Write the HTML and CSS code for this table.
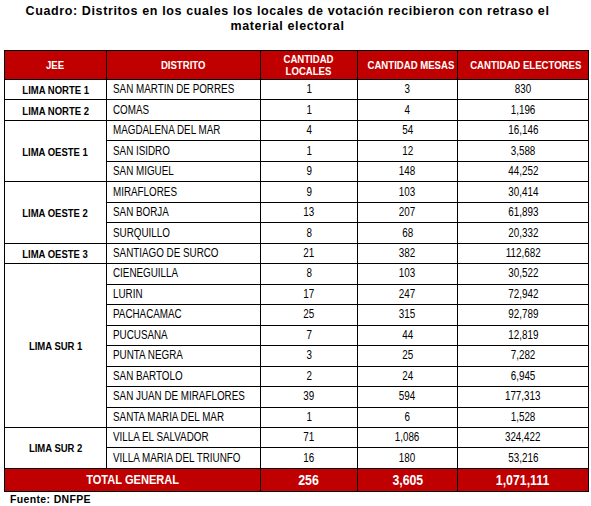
FILE: index.html
```html
<!DOCTYPE html>
<html lang="es">
<head>
<meta charset="utf-8">
<link rel="stylesheet" href="styles.css">
</head>
<body>
<div class="page">
  <h1 class="title">Cuadro: Distritos en los cuales los locales de votación recibieron con retraso el<br>material electoral</h1>
  <table class="grid">
    <colgroup>
      <col class="c1"><col class="c2"><col class="c3"><col class="c4"><col class="c5">
    </colgroup>
    <thead>
      <tr class="head">
        <th><span class="n">JEE</span></th><th><span class="n">DISTRITO</span></th><th><span class="n">CANTIDAD<br>LOCALES</span></th><th><span class="n">CANTIDAD MESAS</span></th><th><span class="n">CANTIDAD ELECTORES</span></th>
      </tr>
    </thead>
    <tbody>
      <tr><td class="jee"><span class="n">LIMA NORTE 1</span></td><td class="dist"><span class="n">SAN MARTIN DE PORRES</span></td><td><span class="n">1</span></td><td><span class="n">3</span></td><td><span class="n">830</span></td></tr>
      <tr><td class="jee"><span class="n">LIMA NORTE 2</span></td><td class="dist"><span class="n">COMAS</span></td><td><span class="n">1</span></td><td><span class="n">4</span></td><td><span class="n">1,196</span></td></tr>
      <tr><td class="jee" rowspan="3"><span class="n">LIMA OESTE 1</span></td><td class="dist"><span class="n">MAGDALENA DEL MAR</span></td><td><span class="n">4</span></td><td><span class="n">54</span></td><td><span class="n">16,146</span></td></tr>
      <tr><td class="dist"><span class="n">SAN ISIDRO</span></td><td><span class="n">1</span></td><td><span class="n">12</span></td><td><span class="n">3,588</span></td></tr>
      <tr><td class="dist"><span class="n">SAN MIGUEL</span></td><td><span class="n">9</span></td><td><span class="n">148</span></td><td><span class="n">44,252</span></td></tr>
      <tr><td class="jee" rowspan="3"><span class="n">LIMA OESTE 2</span></td><td class="dist"><span class="n">MIRAFLORES</span></td><td><span class="n">9</span></td><td><span class="n">103</span></td><td><span class="n">30,414</span></td></tr>
      <tr><td class="dist"><span class="n">SAN BORJA</span></td><td><span class="n">13</span></td><td><span class="n">207</span></td><td><span class="n">61,893</span></td></tr>
      <tr><td class="dist"><span class="n">SURQUILLO</span></td><td><span class="n">8</span></td><td><span class="n">68</span></td><td><span class="n">20,332</span></td></tr>
      <tr><td class="jee"><span class="n">LIMA OESTE 3</span></td><td class="dist"><span class="n">SANTIAGO DE SURCO</span></td><td><span class="n">21</span></td><td><span class="n">382</span></td><td><span class="n">112,682</span></td></tr>
      <tr><td class="jee" rowspan="8"><span class="n">LIMA SUR 1</span></td><td class="dist"><span class="n">CIENEGUILLA</span></td><td><span class="n">8</span></td><td><span class="n">103</span></td><td><span class="n">30,522</span></td></tr>
      <tr><td class="dist"><span class="n">LURIN</span></td><td><span class="n">17</span></td><td><span class="n">247</span></td><td><span class="n">72,942</span></td></tr>
      <tr><td class="dist"><span class="n">PACHACAMAC</span></td><td><span class="n">25</span></td><td><span class="n">315</span></td><td><span class="n">92,789</span></td></tr>
      <tr><td class="dist"><span class="n">PUCUSANA</span></td><td><span class="n">7</span></td><td><span class="n">44</span></td><td><span class="n">12,819</span></td></tr>
      <tr><td class="dist"><span class="n">PUNTA NEGRA</span></td><td><span class="n">3</span></td><td><span class="n">25</span></td><td><span class="n">7,282</span></td></tr>
      <tr><td class="dist"><span class="n">SAN BARTOLO</span></td><td><span class="n">2</span></td><td><span class="n">24</span></td><td><span class="n">6,945</span></td></tr>
      <tr><td class="dist"><span class="n">SAN JUAN DE MIRAFLORES</span></td><td><span class="n">39</span></td><td><span class="n">594</span></td><td><span class="n">177,313</span></td></tr>
      <tr><td class="dist"><span class="n">SANTA MARIA DEL MAR</span></td><td><span class="n">1</span></td><td><span class="n">6</span></td><td><span class="n">1,528</span></td></tr>
      <tr><td class="jee" rowspan="2"><span class="n">LIMA SUR 2</span></td><td class="dist"><span class="n">VILLA EL SALVADOR</span></td><td><span class="n">71</span></td><td><span class="n">1,086</span></td><td><span class="n">324,422</span></td></tr>
      <tr><td class="dist"><span class="n">VILLA MARIA DEL TRIUNFO</span></td><td><span class="n">16</span></td><td><span class="n">180</span></td><td><span class="n">53,216</span></td></tr>
    </tbody>
    <tfoot>
      <tr class="total"><td colspan="2" class="label"><span class="n">TOTAL GENERAL</span></td><td><span class="n">256</span></td><td><span class="n">3,605</span></td><td><span class="n">1,071,111</span></td></tr>
    </tfoot>
  </table>
  <p class="source">Fuente: DNFPE</p>
</div>
</body>
</html>
```
FILE: styles.css
```css
html, body {
  margin: 0;
  padding: 0;
  background: #ffffff;
}
.page {
  width: 591px;
  padding-top: 4px;
}
.title {
  margin: 0 16px 0 0;
  font-family: "Liberation Sans", Arial, sans-serif;
  font-weight: bold;
  font-size: 12.5px;
  letter-spacing: 0.62px;
  line-height: 15px;
  text-align: center;
  color: #000;
}
.grid {
  margin: 16px 0 0 4px;
  border-collapse: collapse;
  table-layout: fixed;
  width: 584px;
  font-family: "Liberation Sans", Arial, sans-serif;
  font-size: 12px;
  color: #000;
}
.c1 { width: 102px; }
.c2 { width: 154px; }
.c3 { width: 97px; }
.c4 { width: 100px; }
.c5 { width: 131px; }
.grid th, .grid td {
  border: 1px solid #000;
  padding: 0;
  text-align: center;
  vertical-align: middle;
  line-height: 13px;
  white-space: nowrap;
}
.n {
  display: inline-block;
  transform: scaleX(0.82);
  transform-origin: center;
}
.head th {
  height: 28px;
  background: #c00000;
  color: #fff;
  font-weight: bold;
  font-size: 11.7px;
  line-height: 12.5px;
}
.grid tbody tr {
  height: 20.47px;
}
.grid td.jee {
  font-weight: bold;
  font-size: 11.6px;
}
.grid td.dist {
  text-align: left;
  padding-left: 6px;
}
.grid td.dist .n {
  transform-origin: left center;
}
.total td {
  height: 22px;
  background: #c00000;
  color: #fff;
  font-weight: bold;
  font-size: 15px;
  line-height: 16px;
}
.total td.label {
  font-size: 13.5px;
}
.source {
  margin: 1px 0 0 10px;
  font-family: "Liberation Sans", Arial, sans-serif;
  font-weight: bold;
  font-size: 10.5px;
  letter-spacing: 0.35px;
  line-height: 12px;
}
```
